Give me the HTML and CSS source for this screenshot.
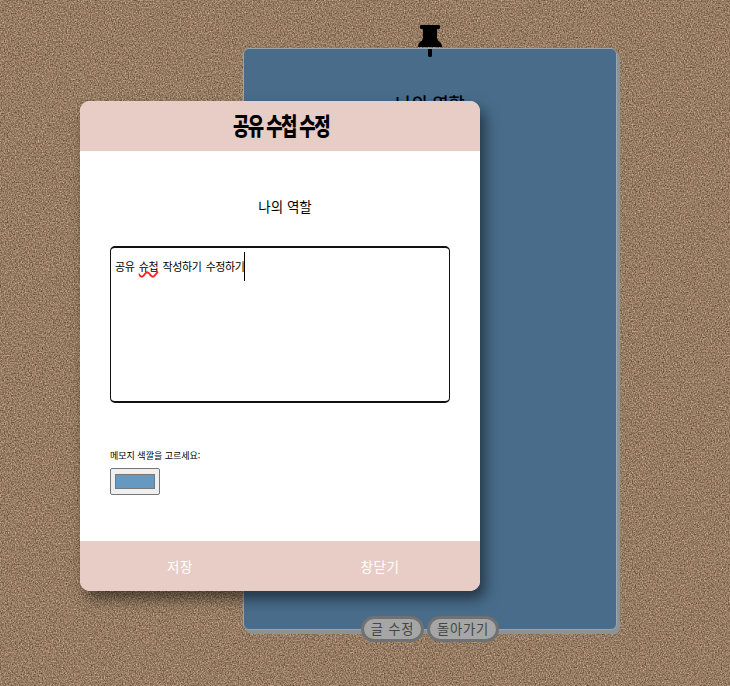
FILE: index.html
```html
<!DOCTYPE html>
<html lang="ko">
<head>
<meta charset="utf-8">
<title>공유 수첩</title>
<link rel="stylesheet" href="styles.css">
</head>
<body>
<svg class="cork" width="730" height="686" aria-hidden="true">
  <filter id="grain" x="0" y="0" width="100%" height="100%" color-interpolation-filters="sRGB">
    <feTurbulence type="fractalNoise" baseFrequency="0.71 0.67" numOctaves="3" seed="8"/>
    <feColorMatrix values="0.5 0.2 0.1 0 0.188  0.48 0.2 0.09 0 0.1  0.44 0.19 0.08 0 0.03  0 0 0 0 1"/>
  </filter>
  <rect width="730" height="686" filter="url(#grain)"/>
</svg>
<main class="note">
  <svg class="pin" viewBox="0 0 24 32" aria-hidden="true">
    <path d="M3 0H21Q22 0 22 1V3Q22 4 21 4H19V13Q19 15 23 18Q24 20 24 22H0Q0 20 1 18Q5 15 5 13V4H3Q2 4 2 3V1Q2 0 3 0ZM10 24H14V31Q14 32 12 32Q10 32 10 31Z"/>
  </svg>
  <h2 class="note-title">나의 역할</h2>
  <div class="note-actions"><button>글 수정</button><button>돌아가기</button></div>
</main>
<section class="modal">
  <header class="modal-head"><h1>공유 수첩 수정</h1></header>
  <div class="modal-body">
    <h3>나의 역할</h3>
    <div class="editor"><span class="hand">공유 <span class="misspelled">슈첩</span> 작성하기 수정하기</span><i class="caret"></i></div>
    <div class="color-label"><span>메모지 색깔을 고르세요:</span></div>
    <div class="color-input"><div class="swatch"></div></div>
  </div>
  <footer class="modal-foot"><button>저장</button><button>창닫기</button></footer>
</section>
</body>
</html>
```
FILE: styles.css
```css
* { box-sizing: border-box; }
body {
  margin: 0;
  width: 730px;
  height: 686px;
  overflow: hidden;
  position: relative;
  background: #967a60;
  color: #000;
  font-family: "Noto Sans CJK KR", sans-serif;
}
h1, h2, h3 { margin: 0; white-space: nowrap; }
button { font-family: inherit; padding: 0; }
.cork { position: absolute; inset: 0; }
.note {
  position: relative;
  width: 374px;
  height: 582px;
  margin: 48px 0 0 243px;
  border: 1px solid #9ba5ab;
  border-radius: 6px;
  background: #486c8a;
  box-shadow: 3px 4px 0 #8e9295;
}
.pin { position: absolute; left: 174px; top: -24px; width: 24px; height: 32px; }
.note-title {
  padding-top: 41px;
  font-size: 17.5px;
  line-height: 26px;
  font-weight: 500;
  text-align: center;
}
.note-actions {
  position: absolute;
  left: 117px;
  top: 567px;
  display: flex;
  gap: 3px;
}
.note-actions button {
  width: 63px;
  height: 26px;
  border: 3px solid #707172;
  border-radius: 13px;
  background: #a6a6a6;
  color: #454545;
  font-size: 13.3px;
  line-height: 20px;
  letter-spacing: 0.8px;
  white-space: nowrap;
}
.note-actions button:last-child { width: 72px; }
.modal {
  position: absolute;
  left: 80px;
  top: 101px;
  width: 400px;
  height: 490px;
  display: flex;
  flex-direction: column;
  border-radius: 10px;
  background: #fff;
  box-shadow: 5px 8px 14px rgba(0, 0, 0, .5);
}
.modal-head {
  height: 50px;
  border-radius: 10px 10px 0 0;
  background: #e8cdc6;
  text-align: center;
}
.modal-head h1 {
  font-size: 24px;
  line-height: 50px;
  font-weight: 900;
  letter-spacing: -2px;
  transform: translate(1px, -1px) scaleX(.74);
}
.modal-body { flex: 1; padding: 42px 30px 0; }
.modal-body h3 {
  padding-left: 10px;
  font-size: 13.5px;
  line-height: 26px;
  font-weight: 400;
  text-align: center;
}
.editor {
  display: flex;
  height: 157px;
  margin-top: 27px;
  padding: 4px;
  border: 1px solid #111;
  border-width: 2px 1px;
  border-radius: 5px;
  font-size: 11px;
  line-height: 28px;
  white-space: nowrap;
}
.hand { width: 129px; letter-spacing: -.4px; word-spacing: 1.6px; }
.misspelled { text-decoration: underline wavy #f22 1.5px; text-underline-offset: 0; }
.caret { width: 1px; height: 29px; background: #000; }
.color-label { height: 20px; margin-top: 44px; font-size: 9px; line-height: 17px; }
.color-label span { display: inline-block; white-space: nowrap; }
.color-input {
  width: 50px;
  height: 27px;
  margin-top: 1px;
  padding: 5px 4px;
  border: 1px solid #767676;
  border-radius: 2px;
  background: #efefef;
}
.swatch { height: 15px; border: 1px solid #777; background: #6699c2; }
.modal-foot {
  display: flex;
  height: 50px;
  border-radius: 0 0 10px 10px;
  background: #e8cdc6;
}
.modal-foot button {
  flex: 1;
  border: 0;
  background: none;
  color: #fff;
  font-size: 13.5px;
  line-height: 50px;
  letter-spacing: .5px;
}
```
